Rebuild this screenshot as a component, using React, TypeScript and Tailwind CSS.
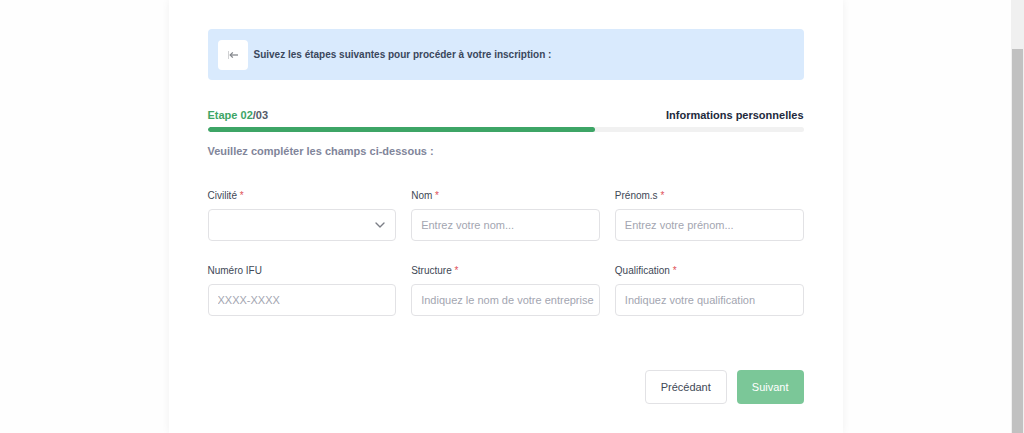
import React, { useState } from 'react';
import { ChevronDown } from 'lucide-react';
import clsx from 'clsx';

interface Field {
    id: string;
    label: string;
    required?: boolean;
    placeholder?: string;
    options?: string[];
}

const FIELDS: Field[] = [
    { id: 'civilite', label: 'Civilité', required: true, options: ['Monsieur', 'Madame'] },
    { id: 'nom', label: 'Nom', required: true, placeholder: 'Entrez votre nom...' },
    { id: 'prenoms', label: 'Prénom.s', required: true, placeholder: 'Entrez votre prénom...' },
    { id: 'ifu', label: 'Numéro IFU', placeholder: 'XXXX-XXXX' },
    { id: 'structure', label: 'Structure', required: true, placeholder: 'Indiquez le nom de votre entreprise' },
    { id: 'qualification', label: 'Qualification', required: true, placeholder: 'Indiquez votre qualification' },
];

const controlClass =
    'block h-8 w-full rounded border border-[#e2e2e5] bg-white pl-[9px] text-[11px] text-[#414856] outline-none placeholder:text-[#a3a6b1] focus:border-[#3da566]';

interface FormFieldProps {
    field: Field;
    value: string;
    onChange: (value: string) => void;
}

const BackIcon = () => (
    <svg viewBox="0 0 12 12" className="h-3 w-3" fill="none" aria-hidden="true">
        <path d="M1.5 2v8" stroke="#d0d1d3" />
        <path d="M3.5 6H11" stroke="#85888d" strokeWidth="1.3" />
        <path d="M5.8 3.4 3.2 6l2.6 2.6" stroke="#85888d" strokeWidth="1.3" />
    </svg>
);

const FormField: React.FC<FormFieldProps> = ({ field, value, onChange }) => (
    <div className="min-w-0">
        <label htmlFor={field.id} className="mb-[5px] block text-[10px] leading-4 text-[#414856]">
            {field.label}
            {field.required && <span className="text-[#e0525a]"> *</span>}
        </label>
        {field.options ? (
            <div className="relative">
                <select
                    id={field.id}
                    className={clsx(controlClass, 'appearance-none pr-8')}
                    value={value}
                    onChange={(e) => onChange(e.target.value)}
                >
                    <option value="" />
                    {field.options.map((option) => (
                        <option key={option} value={option}>{option}</option>
                    ))}
                </select>
                <ChevronDown className="pointer-events-none absolute top-2 right-2 h-4 w-4 text-[#7b7e86]" />
            </div>
        ) : (
            <input
                id={field.id}
                type="text"
                className={clsx(controlClass, 'pr-1')}
                placeholder={field.placeholder}
                value={value}
                onChange={(e) => onChange(e.target.value)}
            />
        )}
    </div>
);

export default function App() {
    const [values, setValues] = useState<Record<string, string>>({});

    return (
        <div className="flex min-h-screen bg-[#fefefe] font-['Liberation_Sans',Arial,sans-serif]">
            <main className="flex min-w-0 flex-1 justify-center">
                <form
                    className="w-full max-w-[674px] bg-white px-[39px] py-[29px] shadow-[0_0_8px_rgba(0,0,0,0.06)]"
                    onSubmit={(e) => e.preventDefault()}
                >
                    <div className="flex h-[51px] items-center gap-1.5 rounded bg-[#d9eafd] px-2.5">
                        <button
                            type="button"
                            aria-label="Retour"
                            className="flex h-[30px] w-[30px] items-center justify-center rounded bg-white"
                        >
                            <BackIcon />
                        </button>
                        <p className="text-[10px] font-bold text-[#39475c]">
                            Suivez les étapes suivantes pour procéder à votre inscription :
                        </p>
                    </div>

                    <div className="mt-[27px] flex items-center justify-between text-[11px] leading-4 font-bold">
                        <span className="text-[#555b68]">
                            <span className="text-[#3da566]">Etape 02</span>/03
                        </span>
                        <span className="text-[#22293c]">Informations personnelles</span>
                    </div>
                    <div className="mt-1 h-[5px] overflow-hidden rounded-full bg-[#f1f1f1]">
                        <div className="h-full w-[65%] rounded-full bg-[#3da566]" />
                    </div>
                    <p className="mt-[11px] text-[11px] leading-4 font-bold text-[#81859a]">
                        Veuillez compléter les champs ci-dessous :
                    </p>

                    <div className="mt-[29px] grid grid-cols-3 gap-x-[15px] gap-y-[22px]">
                        {FIELDS.map((field) => (
                            <FormField
                                key={field.id}
                                field={field}
                                value={values[field.id] ?? ''}
                                onChange={(value) => setValues({ ...values, [field.id]: value })}
                            />
                        ))}
                    </div>

                    <div className="mt-[54px] flex justify-end gap-2.5">
                        <button
                            type="button"
                            className="h-[34px] rounded border border-[#e2e2e5] bg-white px-[15px] text-[11px] text-[#414856]"
                        >
                            Précédant
                        </button>
                        <button
                            type="submit"
                            className="h-[34px] rounded bg-[#7bc798] px-[15px] text-[11px] text-white"
                        >
                            Suivant
                        </button>
                    </div>
                </form>
            </main>

            <div aria-hidden="true" className="flex w-[13px] flex-col bg-[#f0f0f0] px-px pt-[49px]">
                <div className="flex-1 bg-[#c1c1c1]" />
            </div>
        </div>
    );
}
